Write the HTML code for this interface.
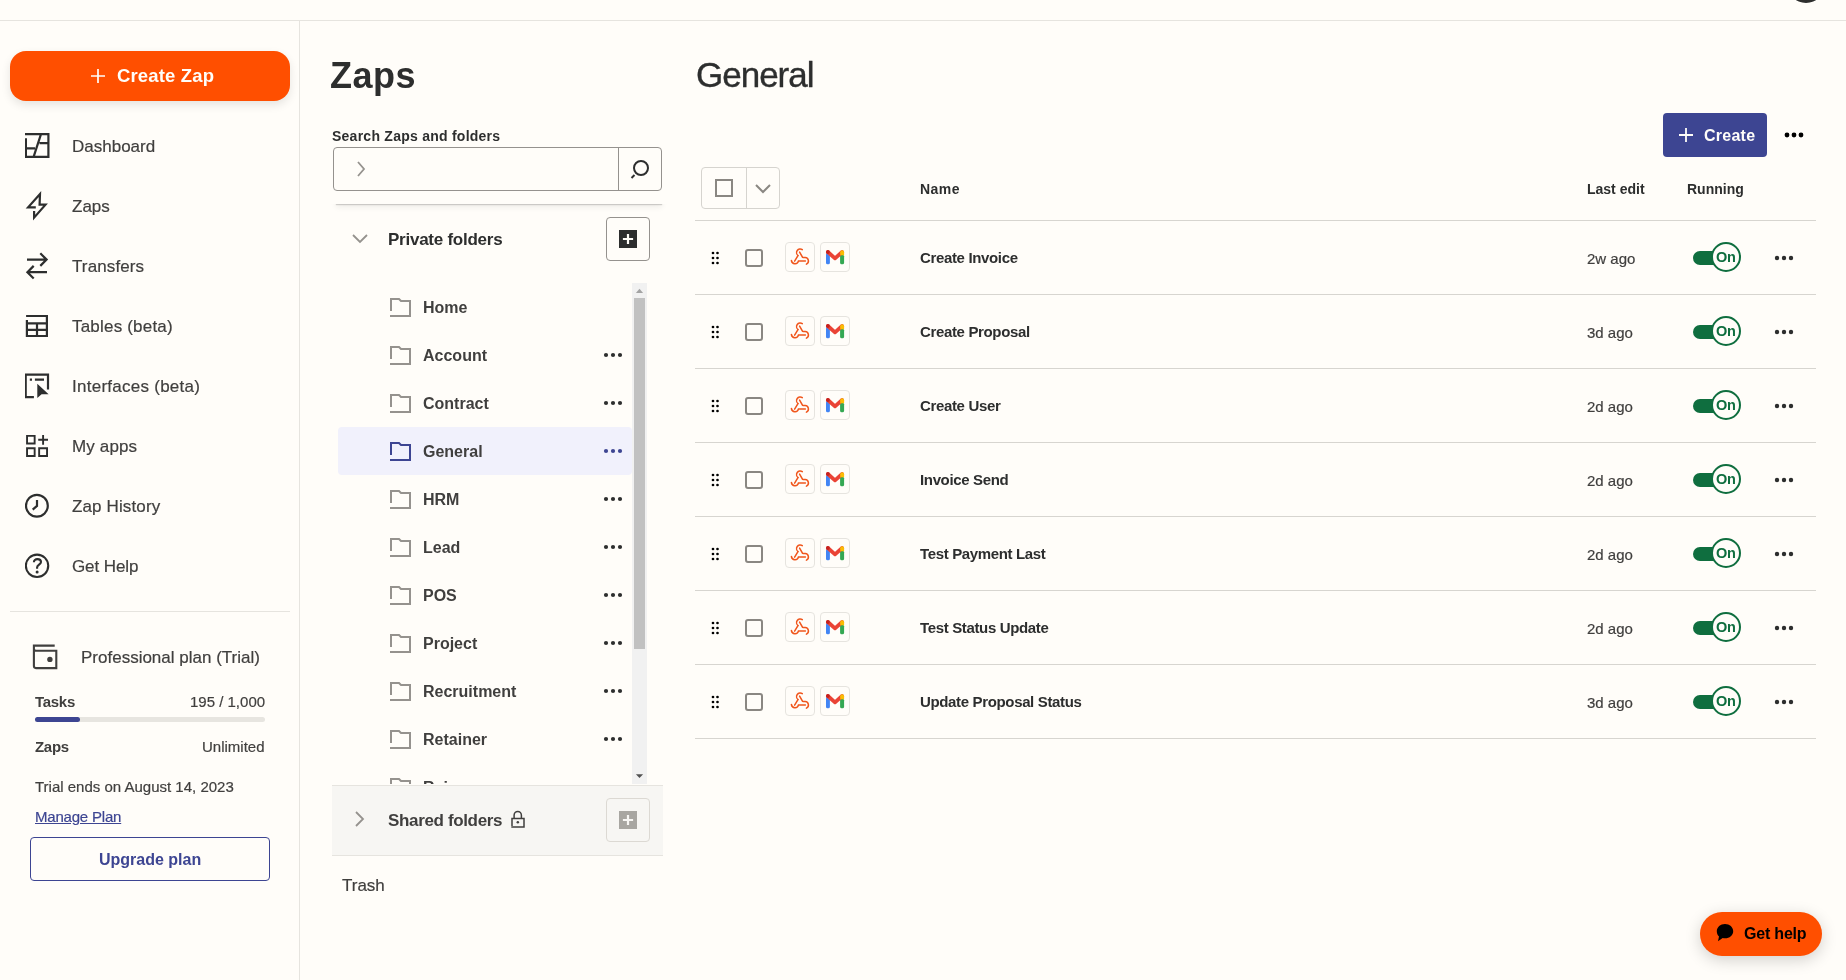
<!DOCTYPE html>
<html><head><meta charset="utf-8"><title>Zaps</title>
<style>
html,body{margin:0;padding:0;}
body{width:1846px;height:980px;overflow:hidden;position:relative;background:#fffdf9;font-family:"Liberation Sans",sans-serif;}
.t{position:absolute;white-space:nowrap;will-change:transform;}
svg{display:block;}
</style></head><body>
<div style="position:absolute;left:0px;top:20px;width:1846px;height:1px;background:#e6e4df"></div>
<div style="position:absolute;left:1787px;top:-35px;width:38px;height:38px;background:#2d2e2e;border-radius:50%"></div>
<div style="position:absolute;left:299px;top:21px;width:1px;height:959px;background:#e6e4df"></div>
<div style="position:absolute;left:10px;top:51px;width:280px;height:50px;background:#ff4f00;border-radius:16px;box-shadow:0 4px 10px rgba(0,0,0,0.10)"></div>
<svg style="position:absolute;left:91px;top:69px;" width="14" height="14" viewBox="0 0 14 14"><path d="M7 0V14M0 7H14" stroke="#fffdf9" stroke-width="1.7"/></svg>
<div class="t" style="top:67px;font-size:18.5px;line-height:18.5px;font-weight:700;color:#fffdf9;letter-spacing:0.15px;left:117px;">Create Zap</div>
<svg style="position:absolute;left:25px;top:133px;" width="26" height="26" viewBox="0 0 26 26"><path d="M0 1.2H23.4V23.9H0.9V5.3M0 15.3H10M14.5 10.2H23M16 1.2L8.6 23.9" fill="none" stroke="#2d2e2e" stroke-width="2.2"/></svg>
<div class="t" style="top:138px;font-size:17px;line-height:17px;font-weight:400;color:#403f3e;-webkit-text-stroke:0.2px currentColor;left:72px;">Dashboard</div>
<svg style="position:absolute;left:25px;top:190px;" width="25" height="31" viewBox="0 0 25 31"><path d="M10.8 17.3H3.1L15 3.9L14.6 14.7H20.5L9.1 27.7V21.1" fill="none" stroke="#2d2e2e" stroke-width="2.2" stroke-linejoin="miter" stroke-miterlimit="10"/></svg>
<div class="t" style="top:198px;font-size:17px;line-height:17px;font-weight:400;color:#403f3e;-webkit-text-stroke:0.2px currentColor;left:72px;">Zaps</div>
<svg style="position:absolute;left:25px;top:252px;" width="25" height="28" viewBox="0 0 25 28"><path d="M2 7.6H21.6M15.3 1.3L21.6 7.6L15.3 13.9M22 20.2H2.4M8.7 13.9L2.4 20.2L8.7 26.5" fill="none" stroke="#2d2e2e" stroke-width="2.2"/></svg>
<div class="t" style="top:258px;font-size:17px;line-height:17px;font-weight:400;color:#403f3e;letter-spacing:0.12px;-webkit-text-stroke:0.2px currentColor;left:72px;">Transfers</div>
<svg style="position:absolute;left:25px;top:314px;" width="25" height="25" viewBox="0 0 25 25"><path d="M1.1 2H21.9V22H1.9V6.1M1.9 9.3H21.9M1.9 15.9H21.9M12 9.3V22" fill="none" stroke="#2d2e2e" stroke-width="2.2"/></svg>
<div class="t" style="top:318px;font-size:17px;line-height:17px;font-weight:400;color:#403f3e;letter-spacing:0.2px;-webkit-text-stroke:0.2px currentColor;left:72px;">Tables (beta)</div>
<svg style="position:absolute;left:25px;top:373px;" width="26" height="27" viewBox="0 0 26 27"><path d="M23 16.6V1.6H0.7V24.2H8.9M4.8 6.6H7M9.9 6.6H19" fill="none" stroke="#2d2e2e" stroke-width="2.2"/><path d="M12.3 10.8L23.6 21.2H16.6L12.3 24.9Z" fill="#2d2e2e"/></svg>
<div class="t" style="top:378px;font-size:17px;line-height:17px;font-weight:400;color:#403f3e;letter-spacing:0.26px;-webkit-text-stroke:0.2px currentColor;left:72px;">Interfaces (beta)</div>
<svg style="position:absolute;left:25px;top:434px;" width="25" height="25" viewBox="0 0 25 25"><path d="M2.05 1.85H9.65V9.55H2.05ZM2.05 14.25H9.65V21.95H2.05ZM14.15 14.25H22.05V21.95H14.15ZM13.2 5.8H23M18.1 0.9V10.8" fill="none" stroke="#2d2e2e" stroke-width="1.9"/></svg>
<div class="t" style="top:438px;font-size:17px;line-height:17px;font-weight:400;color:#403f3e;letter-spacing:0.14px;-webkit-text-stroke:0.2px currentColor;left:72px;">My apps</div>
<svg style="position:absolute;left:25px;top:493px;" width="25" height="26" viewBox="0 0 25 26"><circle cx="11.9" cy="12.7" r="10.9" fill="none" stroke="#2d2e2e" stroke-width="2.2"/><path d="M12 7.1V12.9L7.7 16.6" fill="none" stroke="#2d2e2e" stroke-width="2.2"/></svg>
<div class="t" style="top:498px;font-size:17px;line-height:17px;font-weight:400;color:#403f3e;letter-spacing:0.13px;-webkit-text-stroke:0.2px currentColor;left:72px;">Zap History</div>
<svg style="position:absolute;left:25px;top:553px;" width="25" height="26" viewBox="0 0 25 26"><circle cx="12.05" cy="12.8" r="11.2" fill="none" stroke="#2d2e2e" stroke-width="2.1"/><path d="M8.9 9.2C8.9 7.3 10.3 6.1 12.4 6.1C14.6 6.1 16 7.5 16 9.1C16 11.4 12.1 12 12.1 14.4V15.7" fill="none" stroke="#2d2e2e" stroke-width="2.1"/><circle cx="12.1" cy="19.1" r="1.5" fill="#2d2e2e"/></svg>
<div class="t" style="top:558px;font-size:17px;line-height:17px;font-weight:400;color:#403f3e;letter-spacing:-0.1px;-webkit-text-stroke:0.2px currentColor;left:72px;">Get Help</div>
<div style="position:absolute;left:10px;top:611px;width:280px;height:1px;background:#e6e4df"></div>
<svg style="position:absolute;left:32px;top:644px;" width="27" height="27" viewBox="0 0 27 27"><path d="M1 1.6H22.7M1.9 0.6V22.1Q1.9 24.1 3.9 24.1H24.3V6.8H4Q1.9 6.8 1.9 4.7" fill="none" stroke="#403f3e" stroke-width="2.1"/><circle cx="17.9" cy="15.4" r="2.7" fill="#403f3e"/></svg>
<div class="t" style="top:649px;font-size:17px;line-height:17px;font-weight:400;color:#403f3e;-webkit-text-stroke:0.2px currentColor;left:81px;">Professional plan (Trial)</div>
<div class="t" style="top:694px;font-size:15px;line-height:15px;font-weight:700;color:#403f3e;letter-spacing:-0.3px;left:35px;">Tasks</div>
<div class="t" style="top:694px;font-size:15px;line-height:15px;font-weight:400;color:#403f3e;-webkit-text-stroke:0.2px currentColor;right:1581px;">195 / 1,000</div>
<div style="position:absolute;left:35px;top:717px;width:230px;height:5px;background:#e7e5e0;border-radius:3px"></div>
<div style="position:absolute;left:35px;top:717px;width:45px;height:5px;background:#3d4592;border-radius:3px"></div>
<div class="t" style="top:739px;font-size:15px;line-height:15px;font-weight:700;color:#403f3e;letter-spacing:-0.3px;left:35px;">Zaps</div>
<div class="t" style="top:739px;font-size:15px;line-height:15px;font-weight:400;color:#403f3e;-webkit-text-stroke:0.2px currentColor;right:1581px;">Unlimited</div>
<div class="t" style="top:779px;font-size:15px;line-height:15px;font-weight:400;color:#403f3e;-webkit-text-stroke:0.2px currentColor;left:35px;">Trial ends on August 14, 2023</div>
<div class="t" style="top:809px;font-size:15px;line-height:15px;font-weight:400;color:#3d4592;letter-spacing:-0.2px;-webkit-text-stroke:0.2px currentColor;left:35px;text-decoration:underline;">Manage Plan</div>
<div style="position:absolute;left:30px;top:837px;width:240px;height:44px;border:1px solid #3d4592;border-radius:4px;box-sizing:border-box"></div>
<div class="t" style="top:852px;font-size:16px;line-height:16px;font-weight:700;color:#3d4592;left:99px;">Upgrade plan</div>
<div class="t" style="top:58px;font-size:36px;line-height:36px;font-weight:700;color:#2d2e2e;letter-spacing:0.5px;left:330px;">Zaps</div>
<div class="t" style="top:129px;font-size:14px;line-height:14px;font-weight:700;color:#2d2e2e;letter-spacing:0.25px;left:332px;">Search Zaps and folders</div>
<div style="position:absolute;left:333px;top:147px;width:329px;height:44px;border:1px solid #95928e;border-radius:4px;box-sizing:border-box"></div>
<div style="position:absolute;left:618px;top:147px;width:1px;height:44px;background:#95928e"></div>
<svg style="position:absolute;left:355px;top:160px;" width="12" height="18" viewBox="0 0 12 18"><path d="M3 2L9 9L3 16" fill="none" stroke="#95928e" stroke-width="1.8"/></svg>
<svg style="position:absolute;left:628px;top:156px;" width="24" height="24" viewBox="0 0 24 24"><circle cx="13" cy="12" r="7" fill="none" stroke="#2d2e2e" stroke-width="2"/><path d="M3.5 22L6.5 19" stroke="#2d2e2e" stroke-width="2"/></svg>
<div style="position:absolute;left:320px;top:204px;width:360px;height:14px;overflow:hidden"><div style="position:absolute;left:16px;top:-10px;width:326px;height:10px;background:#fffdf9;box-shadow:0 1px 1px rgba(0,0,0,0.16),0 3px 6px rgba(0,0,0,0.07)"></div></div>
<svg style="position:absolute;left:351px;top:232px;" width="18" height="14" viewBox="0 0 18 14"><path d="M2 3L9 10L16 3" fill="none" stroke="#95928e" stroke-width="1.8"/></svg>
<div class="t" style="top:231px;font-size:17px;line-height:17px;font-weight:700;color:#2d2e2e;letter-spacing:-0.25px;left:388px;">Private folders</div>
<div style="position:absolute;left:606px;top:217px;width:44px;height:44px;border:1px solid #95928e;border-radius:4px;box-sizing:border-box"></div>
<div style="position:absolute;left:619px;top:230px;width:18px;height:18px;background:#2d2e2e"></div>
<svg style="position:absolute;left:619px;top:230px;" width="18" height="18" viewBox="0 0 18 18"><path d="M9 3.9V14.1M3.9 9H14.1" stroke="#fffdf9" stroke-width="2.2"/></svg>
<div style="position:absolute;left:338px;top:427px;width:294px;height:48px;background:#f1f1fc;border-radius:4px"></div>
<svg style="position:absolute;left:389px;top:297px;" width="23" height="21" viewBox="0 0 23 21"><path d="M2 14V2H10L12 4H21V19H1" fill="none" stroke="#95928e" stroke-width="2"/></svg>
<div class="t" style="top:300px;font-size:16px;line-height:16px;font-weight:700;color:#403f3e;left:423px;">Home</div>
<svg style="position:absolute;left:389px;top:345px;" width="23" height="21" viewBox="0 0 23 21"><path d="M2 14V2H10L12 4H21V19H1" fill="none" stroke="#95928e" stroke-width="2"/></svg>
<div class="t" style="top:348px;font-size:16px;line-height:16px;font-weight:700;color:#403f3e;left:423px;">Account</div>
<svg style="position:absolute;left:603px;top:352px;" width="20" height="6" viewBox="0 0 20 6"><circle cx="3" cy="3" r="2.1" fill="#2d2e2e"/><circle cx="10" cy="3" r="2.1" fill="#2d2e2e"/><circle cx="17" cy="3" r="2.1" fill="#2d2e2e"/></svg>
<svg style="position:absolute;left:389px;top:393px;" width="23" height="21" viewBox="0 0 23 21"><path d="M2 14V2H10L12 4H21V19H1" fill="none" stroke="#95928e" stroke-width="2"/></svg>
<div class="t" style="top:396px;font-size:16px;line-height:16px;font-weight:700;color:#403f3e;left:423px;">Contract</div>
<svg style="position:absolute;left:603px;top:400px;" width="20" height="6" viewBox="0 0 20 6"><circle cx="3" cy="3" r="2.1" fill="#2d2e2e"/><circle cx="10" cy="3" r="2.1" fill="#2d2e2e"/><circle cx="17" cy="3" r="2.1" fill="#2d2e2e"/></svg>
<svg style="position:absolute;left:389px;top:441px;" width="23" height="21" viewBox="0 0 23 21"><path d="M2 14V2H10L12 4H21V19H1" fill="none" stroke="#3d4592" stroke-width="2"/></svg>
<div class="t" style="top:444px;font-size:16px;line-height:16px;font-weight:700;color:#403f3e;left:423px;">General</div>
<svg style="position:absolute;left:603px;top:448px;" width="20" height="6" viewBox="0 0 20 6"><circle cx="3" cy="3" r="2.1" fill="#3d4592"/><circle cx="10" cy="3" r="2.1" fill="#3d4592"/><circle cx="17" cy="3" r="2.1" fill="#3d4592"/></svg>
<svg style="position:absolute;left:389px;top:489px;" width="23" height="21" viewBox="0 0 23 21"><path d="M2 14V2H10L12 4H21V19H1" fill="none" stroke="#95928e" stroke-width="2"/></svg>
<div class="t" style="top:492px;font-size:16px;line-height:16px;font-weight:700;color:#403f3e;left:423px;">HRM</div>
<svg style="position:absolute;left:603px;top:496px;" width="20" height="6" viewBox="0 0 20 6"><circle cx="3" cy="3" r="2.1" fill="#2d2e2e"/><circle cx="10" cy="3" r="2.1" fill="#2d2e2e"/><circle cx="17" cy="3" r="2.1" fill="#2d2e2e"/></svg>
<svg style="position:absolute;left:389px;top:537px;" width="23" height="21" viewBox="0 0 23 21"><path d="M2 14V2H10L12 4H21V19H1" fill="none" stroke="#95928e" stroke-width="2"/></svg>
<div class="t" style="top:540px;font-size:16px;line-height:16px;font-weight:700;color:#403f3e;left:423px;">Lead</div>
<svg style="position:absolute;left:603px;top:544px;" width="20" height="6" viewBox="0 0 20 6"><circle cx="3" cy="3" r="2.1" fill="#2d2e2e"/><circle cx="10" cy="3" r="2.1" fill="#2d2e2e"/><circle cx="17" cy="3" r="2.1" fill="#2d2e2e"/></svg>
<svg style="position:absolute;left:389px;top:585px;" width="23" height="21" viewBox="0 0 23 21"><path d="M2 14V2H10L12 4H21V19H1" fill="none" stroke="#95928e" stroke-width="2"/></svg>
<div class="t" style="top:588px;font-size:16px;line-height:16px;font-weight:700;color:#403f3e;left:423px;">POS</div>
<svg style="position:absolute;left:603px;top:592px;" width="20" height="6" viewBox="0 0 20 6"><circle cx="3" cy="3" r="2.1" fill="#2d2e2e"/><circle cx="10" cy="3" r="2.1" fill="#2d2e2e"/><circle cx="17" cy="3" r="2.1" fill="#2d2e2e"/></svg>
<svg style="position:absolute;left:389px;top:633px;" width="23" height="21" viewBox="0 0 23 21"><path d="M2 14V2H10L12 4H21V19H1" fill="none" stroke="#95928e" stroke-width="2"/></svg>
<div class="t" style="top:636px;font-size:16px;line-height:16px;font-weight:700;color:#403f3e;left:423px;">Project</div>
<svg style="position:absolute;left:603px;top:640px;" width="20" height="6" viewBox="0 0 20 6"><circle cx="3" cy="3" r="2.1" fill="#2d2e2e"/><circle cx="10" cy="3" r="2.1" fill="#2d2e2e"/><circle cx="17" cy="3" r="2.1" fill="#2d2e2e"/></svg>
<svg style="position:absolute;left:389px;top:681px;" width="23" height="21" viewBox="0 0 23 21"><path d="M2 14V2H10L12 4H21V19H1" fill="none" stroke="#95928e" stroke-width="2"/></svg>
<div class="t" style="top:684px;font-size:16px;line-height:16px;font-weight:700;color:#403f3e;left:423px;">Recruitment</div>
<svg style="position:absolute;left:603px;top:688px;" width="20" height="6" viewBox="0 0 20 6"><circle cx="3" cy="3" r="2.1" fill="#2d2e2e"/><circle cx="10" cy="3" r="2.1" fill="#2d2e2e"/><circle cx="17" cy="3" r="2.1" fill="#2d2e2e"/></svg>
<svg style="position:absolute;left:389px;top:729px;" width="23" height="21" viewBox="0 0 23 21"><path d="M2 14V2H10L12 4H21V19H1" fill="none" stroke="#95928e" stroke-width="2"/></svg>
<div class="t" style="top:732px;font-size:16px;line-height:16px;font-weight:700;color:#403f3e;left:423px;">Retainer</div>
<svg style="position:absolute;left:603px;top:736px;" width="20" height="6" viewBox="0 0 20 6"><circle cx="3" cy="3" r="2.1" fill="#2d2e2e"/><circle cx="10" cy="3" r="2.1" fill="#2d2e2e"/><circle cx="17" cy="3" r="2.1" fill="#2d2e2e"/></svg>
<svg style="position:absolute;left:389px;top:777px;" width="23" height="21" viewBox="0 0 23 21"><path d="M2 14V2H10L12 4H21V19H1" fill="none" stroke="#95928e" stroke-width="2"/></svg>
<div class="t" style="top:780px;font-size:16px;line-height:16px;font-weight:700;color:#403f3e;left:423px;">Reissue</div>
<svg style="position:absolute;left:603px;top:784px;" width="20" height="6" viewBox="0 0 20 6"><circle cx="3" cy="3" r="2.1" fill="#2d2e2e"/><circle cx="10" cy="3" r="2.1" fill="#2d2e2e"/><circle cx="17" cy="3" r="2.1" fill="#2d2e2e"/></svg>
<div style="position:absolute;left:332px;top:205px;width:300px;height:78px;background:transparent"></div>
<div style="position:absolute;left:332px;top:784px;width:300px;height:1px;background:#fffdf9"></div>
<div style="position:absolute;left:632px;top:283px;width:15px;height:501px;background:#f1f1f1"></div>
<div style="position:absolute;left:634px;top:298px;width:11px;height:351px;background:#c1c1c1"></div>
<svg style="position:absolute;left:635px;top:285px;" width="9" height="9" viewBox="0 0 9 9"><path d="M0.9 7.9L4.5 3.8L8.1 7.9Z" fill="#a3a3a3"/></svg>
<svg style="position:absolute;left:635px;top:771px;" width="9" height="9" viewBox="0 0 9 9"><path d="M0.9 3.2L4.5 7L8.1 3.2Z" fill="#505050"/></svg>
<div style="position:absolute;left:332px;top:785px;width:331px;height:71px;background:#f7f6f3;border-top:1px solid #e6e4df;border-bottom:1px solid #e6e4df;box-sizing:border-box"></div>
<svg style="position:absolute;left:352px;top:810px;" width="14" height="18" viewBox="0 0 14 18"><path d="M4 2L11 9L4 16" fill="none" stroke="#95928e" stroke-width="1.8"/></svg>
<div class="t" style="top:812px;font-size:17px;line-height:17px;font-weight:700;color:#403f3e;letter-spacing:-0.35px;left:387.5px;">Shared folders</div>
<svg style="position:absolute;left:510px;top:810px;" width="16" height="19" viewBox="0 0 16 19"><path d="M4.1 8.4V5.2A3.65 3.65 0 0 1 11.4 5.2V8.4M2 16V8.4H14V17.1H1.3" fill="none" stroke="#403f3e" stroke-width="1.5"/><circle cx="7.8" cy="12.3" r="1.25" fill="#403f3e"/></svg>
<div style="position:absolute;left:606px;top:798px;width:44px;height:44px;border:1px solid #dcd9d3;border-radius:4px;box-sizing:border-box"></div>
<div style="position:absolute;left:619px;top:811px;width:18px;height:18px;background:#a8a6a1"></div>
<svg style="position:absolute;left:619px;top:811px;" width="18" height="18" viewBox="0 0 18 18"><path d="M9 3.9V14.1M3.9 9H14.1" stroke="#f7f6f3" stroke-width="2.2"/></svg>
<div class="t" style="top:877px;font-size:17px;line-height:17px;font-weight:400;color:#403f3e;-webkit-text-stroke:0.2px currentColor;left:342px;">Trash</div>
<div class="t" style="top:57px;font-size:35px;line-height:35px;font-weight:400;color:#2d2e2e;letter-spacing:-1px;left:696px;-webkit-text-stroke:0.35px #2d2e2e;">General</div>
<div style="position:absolute;left:1663px;top:113px;width:104px;height:44px;background:#3d4592;border-radius:4px"></div>
<svg style="position:absolute;left:1679px;top:128px;" width="14" height="14" viewBox="0 0 14 14"><path d="M7 0V14M0 7H14" stroke="#fffdf9" stroke-width="1.8"/></svg>
<div class="t" style="top:128px;font-size:16px;line-height:16px;font-weight:700;color:#fffdf9;letter-spacing:0.25px;left:1704.3px;">Create</div>
<svg style="position:absolute;left:1784px;top:131px;" width="20" height="8" viewBox="0 0 20 8"><circle cx="3" cy="4" r="2.4" fill="#000"/><circle cx="10" cy="4" r="2.4" fill="#000"/><circle cx="17" cy="4" r="2.4" fill="#000"/></svg>
<div style="position:absolute;left:701px;top:167px;width:79px;height:42px;border:1px solid #d6d4cf;border-radius:4px;box-sizing:border-box"></div>
<div style="position:absolute;left:746px;top:167px;width:1px;height:42px;background:#d6d4cf"></div>
<div style="position:absolute;left:715px;top:179px;width:18px;height:18px;border:2px solid #8a8782;box-sizing:border-box"></div>
<svg style="position:absolute;left:754px;top:183px;" width="18" height="12" viewBox="0 0 18 12"><path d="M2 2L9 9L16 2" fill="none" stroke="#8a8782" stroke-width="2"/></svg>
<div class="t" style="top:182px;font-size:14px;line-height:14px;font-weight:700;color:#2d2e2e;letter-spacing:0.45px;left:920px;">Name</div>
<div class="t" style="top:182px;font-size:14px;line-height:14px;font-weight:700;color:#2d2e2e;left:1587px;">Last edit</div>
<div class="t" style="top:182px;font-size:14px;line-height:14px;font-weight:700;color:#2d2e2e;left:1687px;">Running</div>
<div style="position:absolute;left:695px;top:220px;width:1121px;height:1px;background:#d7d5d0"></div>
<svg style="position:absolute;left:711px;top:250px;" width="9" height="16" viewBox="0 0 9 16"><circle cx="2" cy="3" r="1.35" fill="#000"/><circle cx="2" cy="8" r="1.35" fill="#000"/><circle cx="2" cy="13" r="1.35" fill="#000"/><circle cx="6.5" cy="3" r="1.35" fill="#000"/><circle cx="6.5" cy="8" r="1.35" fill="#000"/><circle cx="6.5" cy="13" r="1.35" fill="#000"/></svg>
<div style="position:absolute;left:745px;top:249px;width:18px;height:18px;border:2px solid #8a8782;border-radius:3px;box-sizing:border-box"></div>
<div style="position:absolute;left:785px;top:242px;width:30px;height:30px;border:1px solid #e6e4df;border-radius:4px;box-sizing:border-box"></div>
<div style="position:absolute;left:820px;top:242px;width:30px;height:30px;border:1px solid #e6e4df;border-radius:4px;box-sizing:border-box"></div>
<svg style="position:absolute;left:788px;top:245px;" width="24" height="24" viewBox="0 0 24 24"><g fill="none" stroke="#f0561c" stroke-width="1.5" stroke-linecap="round"><path d="M14.3 4.6A3.6 3.6 0 1 0 10.1 10.5L6.6 16.2"/><path d="M11.6 7.1L14.6 12.4C15.3 12.7 16.2 12.6 17.2 12.6A3.4 3.4 0 0 1 18.4 19.1"/><path d="M3.4 15.4A3.6 3.6 0 0 0 10.5 15.9H17.4"/></g></svg>
<svg style="position:absolute;left:823px;top:246px;" width="24" height="22" viewBox="0 0 24 22"><g transform="translate(0 0.7)"><rect x="3" y="6" width="3.9" height="11.6" rx="1.6" fill="#4285f4"/><rect x="17.1" y="8" width="4" height="9.6" rx="1.6" fill="#34a853"/><path d="M4.9 5.3L12 11.6L19.1 5.3" fill="none" stroke="#ea4335" stroke-width="3.8" stroke-linecap="round" stroke-linejoin="round"/><path d="M17.2 8.6V5.5A1.95 1.95 0 0 1 21.1 5.5V8.6Z" fill="#fbbc04"/><circle cx="4.9" cy="5.3" r="1.9" fill="#c5221f"/></g></svg>
<div class="t" style="top:250px;font-size:15px;line-height:15px;font-weight:700;color:#2d2e2e;letter-spacing:-0.35px;left:920px;">Create Invoice</div>
<div class="t" style="top:251px;font-size:15px;line-height:15px;font-weight:400;color:#403f3e;-webkit-text-stroke:0.2px currentColor;left:1587px;">2w ago</div>
<div style="position:absolute;left:1693px;top:251px;width:45px;height:14px;background:#0f6e3f;border-radius:7px"></div>
<div style="position:absolute;left:1711px;top:242px;width:30px;height:30px;background:#fffdf9;border:2px solid #0f6e3f;border-radius:50%;box-sizing:border-box"></div>
<div class="t" style="top:250px;font-size:14.5px;line-height:14.5px;font-weight:700;color:#0f6e3f;letter-spacing:-0.3px;left:1716px;">On</div>
<svg style="position:absolute;left:1774px;top:254px;" width="20" height="7" viewBox="0 0 20 7"><circle cx="3" cy="4" r="2.2" fill="#2d2e2e"/><circle cx="10" cy="4" r="2.2" fill="#2d2e2e"/><circle cx="17" cy="4" r="2.2" fill="#2d2e2e"/></svg>
<div style="position:absolute;left:695px;top:294px;width:1121px;height:1px;background:#d7d5d0"></div>
<svg style="position:absolute;left:711px;top:324px;" width="9" height="16" viewBox="0 0 9 16"><circle cx="2" cy="3" r="1.35" fill="#000"/><circle cx="2" cy="8" r="1.35" fill="#000"/><circle cx="2" cy="13" r="1.35" fill="#000"/><circle cx="6.5" cy="3" r="1.35" fill="#000"/><circle cx="6.5" cy="8" r="1.35" fill="#000"/><circle cx="6.5" cy="13" r="1.35" fill="#000"/></svg>
<div style="position:absolute;left:745px;top:323px;width:18px;height:18px;border:2px solid #8a8782;border-radius:3px;box-sizing:border-box"></div>
<div style="position:absolute;left:785px;top:316px;width:30px;height:30px;border:1px solid #e6e4df;border-radius:4px;box-sizing:border-box"></div>
<div style="position:absolute;left:820px;top:316px;width:30px;height:30px;border:1px solid #e6e4df;border-radius:4px;box-sizing:border-box"></div>
<svg style="position:absolute;left:788px;top:319px;" width="24" height="24" viewBox="0 0 24 24"><g fill="none" stroke="#f0561c" stroke-width="1.5" stroke-linecap="round"><path d="M14.3 4.6A3.6 3.6 0 1 0 10.1 10.5L6.6 16.2"/><path d="M11.6 7.1L14.6 12.4C15.3 12.7 16.2 12.6 17.2 12.6A3.4 3.4 0 0 1 18.4 19.1"/><path d="M3.4 15.4A3.6 3.6 0 0 0 10.5 15.9H17.4"/></g></svg>
<svg style="position:absolute;left:823px;top:320px;" width="24" height="22" viewBox="0 0 24 22"><g transform="translate(0 0.7)"><rect x="3" y="6" width="3.9" height="11.6" rx="1.6" fill="#4285f4"/><rect x="17.1" y="8" width="4" height="9.6" rx="1.6" fill="#34a853"/><path d="M4.9 5.3L12 11.6L19.1 5.3" fill="none" stroke="#ea4335" stroke-width="3.8" stroke-linecap="round" stroke-linejoin="round"/><path d="M17.2 8.6V5.5A1.95 1.95 0 0 1 21.1 5.5V8.6Z" fill="#fbbc04"/><circle cx="4.9" cy="5.3" r="1.9" fill="#c5221f"/></g></svg>
<div class="t" style="top:324px;font-size:15px;line-height:15px;font-weight:700;color:#2d2e2e;letter-spacing:-0.35px;left:920px;">Create Proposal</div>
<div class="t" style="top:325px;font-size:15px;line-height:15px;font-weight:400;color:#403f3e;-webkit-text-stroke:0.2px currentColor;left:1587px;">3d ago</div>
<div style="position:absolute;left:1693px;top:325px;width:45px;height:14px;background:#0f6e3f;border-radius:7px"></div>
<div style="position:absolute;left:1711px;top:316px;width:30px;height:30px;background:#fffdf9;border:2px solid #0f6e3f;border-radius:50%;box-sizing:border-box"></div>
<div class="t" style="top:324px;font-size:14.5px;line-height:14.5px;font-weight:700;color:#0f6e3f;letter-spacing:-0.3px;left:1716px;">On</div>
<svg style="position:absolute;left:1774px;top:328px;" width="20" height="7" viewBox="0 0 20 7"><circle cx="3" cy="4" r="2.2" fill="#2d2e2e"/><circle cx="10" cy="4" r="2.2" fill="#2d2e2e"/><circle cx="17" cy="4" r="2.2" fill="#2d2e2e"/></svg>
<div style="position:absolute;left:695px;top:368px;width:1121px;height:1px;background:#d7d5d0"></div>
<svg style="position:absolute;left:711px;top:398px;" width="9" height="16" viewBox="0 0 9 16"><circle cx="2" cy="3" r="1.35" fill="#000"/><circle cx="2" cy="8" r="1.35" fill="#000"/><circle cx="2" cy="13" r="1.35" fill="#000"/><circle cx="6.5" cy="3" r="1.35" fill="#000"/><circle cx="6.5" cy="8" r="1.35" fill="#000"/><circle cx="6.5" cy="13" r="1.35" fill="#000"/></svg>
<div style="position:absolute;left:745px;top:397px;width:18px;height:18px;border:2px solid #8a8782;border-radius:3px;box-sizing:border-box"></div>
<div style="position:absolute;left:785px;top:390px;width:30px;height:30px;border:1px solid #e6e4df;border-radius:4px;box-sizing:border-box"></div>
<div style="position:absolute;left:820px;top:390px;width:30px;height:30px;border:1px solid #e6e4df;border-radius:4px;box-sizing:border-box"></div>
<svg style="position:absolute;left:788px;top:393px;" width="24" height="24" viewBox="0 0 24 24"><g fill="none" stroke="#f0561c" stroke-width="1.5" stroke-linecap="round"><path d="M14.3 4.6A3.6 3.6 0 1 0 10.1 10.5L6.6 16.2"/><path d="M11.6 7.1L14.6 12.4C15.3 12.7 16.2 12.6 17.2 12.6A3.4 3.4 0 0 1 18.4 19.1"/><path d="M3.4 15.4A3.6 3.6 0 0 0 10.5 15.9H17.4"/></g></svg>
<svg style="position:absolute;left:823px;top:394px;" width="24" height="22" viewBox="0 0 24 22"><g transform="translate(0 0.7)"><rect x="3" y="6" width="3.9" height="11.6" rx="1.6" fill="#4285f4"/><rect x="17.1" y="8" width="4" height="9.6" rx="1.6" fill="#34a853"/><path d="M4.9 5.3L12 11.6L19.1 5.3" fill="none" stroke="#ea4335" stroke-width="3.8" stroke-linecap="round" stroke-linejoin="round"/><path d="M17.2 8.6V5.5A1.95 1.95 0 0 1 21.1 5.5V8.6Z" fill="#fbbc04"/><circle cx="4.9" cy="5.3" r="1.9" fill="#c5221f"/></g></svg>
<div class="t" style="top:398px;font-size:15px;line-height:15px;font-weight:700;color:#2d2e2e;letter-spacing:-0.35px;left:920px;">Create User</div>
<div class="t" style="top:399px;font-size:15px;line-height:15px;font-weight:400;color:#403f3e;-webkit-text-stroke:0.2px currentColor;left:1587px;">2d ago</div>
<div style="position:absolute;left:1693px;top:399px;width:45px;height:14px;background:#0f6e3f;border-radius:7px"></div>
<div style="position:absolute;left:1711px;top:390px;width:30px;height:30px;background:#fffdf9;border:2px solid #0f6e3f;border-radius:50%;box-sizing:border-box"></div>
<div class="t" style="top:398px;font-size:14.5px;line-height:14.5px;font-weight:700;color:#0f6e3f;letter-spacing:-0.3px;left:1716px;">On</div>
<svg style="position:absolute;left:1774px;top:402px;" width="20" height="7" viewBox="0 0 20 7"><circle cx="3" cy="4" r="2.2" fill="#2d2e2e"/><circle cx="10" cy="4" r="2.2" fill="#2d2e2e"/><circle cx="17" cy="4" r="2.2" fill="#2d2e2e"/></svg>
<div style="position:absolute;left:695px;top:442px;width:1121px;height:1px;background:#d7d5d0"></div>
<svg style="position:absolute;left:711px;top:472px;" width="9" height="16" viewBox="0 0 9 16"><circle cx="2" cy="3" r="1.35" fill="#000"/><circle cx="2" cy="8" r="1.35" fill="#000"/><circle cx="2" cy="13" r="1.35" fill="#000"/><circle cx="6.5" cy="3" r="1.35" fill="#000"/><circle cx="6.5" cy="8" r="1.35" fill="#000"/><circle cx="6.5" cy="13" r="1.35" fill="#000"/></svg>
<div style="position:absolute;left:745px;top:471px;width:18px;height:18px;border:2px solid #8a8782;border-radius:3px;box-sizing:border-box"></div>
<div style="position:absolute;left:785px;top:464px;width:30px;height:30px;border:1px solid #e6e4df;border-radius:4px;box-sizing:border-box"></div>
<div style="position:absolute;left:820px;top:464px;width:30px;height:30px;border:1px solid #e6e4df;border-radius:4px;box-sizing:border-box"></div>
<svg style="position:absolute;left:788px;top:467px;" width="24" height="24" viewBox="0 0 24 24"><g fill="none" stroke="#f0561c" stroke-width="1.5" stroke-linecap="round"><path d="M14.3 4.6A3.6 3.6 0 1 0 10.1 10.5L6.6 16.2"/><path d="M11.6 7.1L14.6 12.4C15.3 12.7 16.2 12.6 17.2 12.6A3.4 3.4 0 0 1 18.4 19.1"/><path d="M3.4 15.4A3.6 3.6 0 0 0 10.5 15.9H17.4"/></g></svg>
<svg style="position:absolute;left:823px;top:468px;" width="24" height="22" viewBox="0 0 24 22"><g transform="translate(0 0.7)"><rect x="3" y="6" width="3.9" height="11.6" rx="1.6" fill="#4285f4"/><rect x="17.1" y="8" width="4" height="9.6" rx="1.6" fill="#34a853"/><path d="M4.9 5.3L12 11.6L19.1 5.3" fill="none" stroke="#ea4335" stroke-width="3.8" stroke-linecap="round" stroke-linejoin="round"/><path d="M17.2 8.6V5.5A1.95 1.95 0 0 1 21.1 5.5V8.6Z" fill="#fbbc04"/><circle cx="4.9" cy="5.3" r="1.9" fill="#c5221f"/></g></svg>
<div class="t" style="top:472px;font-size:15px;line-height:15px;font-weight:700;color:#2d2e2e;letter-spacing:-0.35px;left:920px;">Invoice Send</div>
<div class="t" style="top:473px;font-size:15px;line-height:15px;font-weight:400;color:#403f3e;-webkit-text-stroke:0.2px currentColor;left:1587px;">2d ago</div>
<div style="position:absolute;left:1693px;top:473px;width:45px;height:14px;background:#0f6e3f;border-radius:7px"></div>
<div style="position:absolute;left:1711px;top:464px;width:30px;height:30px;background:#fffdf9;border:2px solid #0f6e3f;border-radius:50%;box-sizing:border-box"></div>
<div class="t" style="top:472px;font-size:14.5px;line-height:14.5px;font-weight:700;color:#0f6e3f;letter-spacing:-0.3px;left:1716px;">On</div>
<svg style="position:absolute;left:1774px;top:476px;" width="20" height="7" viewBox="0 0 20 7"><circle cx="3" cy="4" r="2.2" fill="#2d2e2e"/><circle cx="10" cy="4" r="2.2" fill="#2d2e2e"/><circle cx="17" cy="4" r="2.2" fill="#2d2e2e"/></svg>
<div style="position:absolute;left:695px;top:516px;width:1121px;height:1px;background:#d7d5d0"></div>
<svg style="position:absolute;left:711px;top:546px;" width="9" height="16" viewBox="0 0 9 16"><circle cx="2" cy="3" r="1.35" fill="#000"/><circle cx="2" cy="8" r="1.35" fill="#000"/><circle cx="2" cy="13" r="1.35" fill="#000"/><circle cx="6.5" cy="3" r="1.35" fill="#000"/><circle cx="6.5" cy="8" r="1.35" fill="#000"/><circle cx="6.5" cy="13" r="1.35" fill="#000"/></svg>
<div style="position:absolute;left:745px;top:545px;width:18px;height:18px;border:2px solid #8a8782;border-radius:3px;box-sizing:border-box"></div>
<div style="position:absolute;left:785px;top:538px;width:30px;height:30px;border:1px solid #e6e4df;border-radius:4px;box-sizing:border-box"></div>
<div style="position:absolute;left:820px;top:538px;width:30px;height:30px;border:1px solid #e6e4df;border-radius:4px;box-sizing:border-box"></div>
<svg style="position:absolute;left:788px;top:541px;" width="24" height="24" viewBox="0 0 24 24"><g fill="none" stroke="#f0561c" stroke-width="1.5" stroke-linecap="round"><path d="M14.3 4.6A3.6 3.6 0 1 0 10.1 10.5L6.6 16.2"/><path d="M11.6 7.1L14.6 12.4C15.3 12.7 16.2 12.6 17.2 12.6A3.4 3.4 0 0 1 18.4 19.1"/><path d="M3.4 15.4A3.6 3.6 0 0 0 10.5 15.9H17.4"/></g></svg>
<svg style="position:absolute;left:823px;top:542px;" width="24" height="22" viewBox="0 0 24 22"><g transform="translate(0 0.7)"><rect x="3" y="6" width="3.9" height="11.6" rx="1.6" fill="#4285f4"/><rect x="17.1" y="8" width="4" height="9.6" rx="1.6" fill="#34a853"/><path d="M4.9 5.3L12 11.6L19.1 5.3" fill="none" stroke="#ea4335" stroke-width="3.8" stroke-linecap="round" stroke-linejoin="round"/><path d="M17.2 8.6V5.5A1.95 1.95 0 0 1 21.1 5.5V8.6Z" fill="#fbbc04"/><circle cx="4.9" cy="5.3" r="1.9" fill="#c5221f"/></g></svg>
<div class="t" style="top:546px;font-size:15px;line-height:15px;font-weight:700;color:#2d2e2e;letter-spacing:-0.35px;left:920px;">Test Payment Last</div>
<div class="t" style="top:547px;font-size:15px;line-height:15px;font-weight:400;color:#403f3e;-webkit-text-stroke:0.2px currentColor;left:1587px;">2d ago</div>
<div style="position:absolute;left:1693px;top:547px;width:45px;height:14px;background:#0f6e3f;border-radius:7px"></div>
<div style="position:absolute;left:1711px;top:538px;width:30px;height:30px;background:#fffdf9;border:2px solid #0f6e3f;border-radius:50%;box-sizing:border-box"></div>
<div class="t" style="top:546px;font-size:14.5px;line-height:14.5px;font-weight:700;color:#0f6e3f;letter-spacing:-0.3px;left:1716px;">On</div>
<svg style="position:absolute;left:1774px;top:550px;" width="20" height="7" viewBox="0 0 20 7"><circle cx="3" cy="4" r="2.2" fill="#2d2e2e"/><circle cx="10" cy="4" r="2.2" fill="#2d2e2e"/><circle cx="17" cy="4" r="2.2" fill="#2d2e2e"/></svg>
<div style="position:absolute;left:695px;top:590px;width:1121px;height:1px;background:#d7d5d0"></div>
<svg style="position:absolute;left:711px;top:620px;" width="9" height="16" viewBox="0 0 9 16"><circle cx="2" cy="3" r="1.35" fill="#000"/><circle cx="2" cy="8" r="1.35" fill="#000"/><circle cx="2" cy="13" r="1.35" fill="#000"/><circle cx="6.5" cy="3" r="1.35" fill="#000"/><circle cx="6.5" cy="8" r="1.35" fill="#000"/><circle cx="6.5" cy="13" r="1.35" fill="#000"/></svg>
<div style="position:absolute;left:745px;top:619px;width:18px;height:18px;border:2px solid #8a8782;border-radius:3px;box-sizing:border-box"></div>
<div style="position:absolute;left:785px;top:612px;width:30px;height:30px;border:1px solid #e6e4df;border-radius:4px;box-sizing:border-box"></div>
<div style="position:absolute;left:820px;top:612px;width:30px;height:30px;border:1px solid #e6e4df;border-radius:4px;box-sizing:border-box"></div>
<svg style="position:absolute;left:788px;top:615px;" width="24" height="24" viewBox="0 0 24 24"><g fill="none" stroke="#f0561c" stroke-width="1.5" stroke-linecap="round"><path d="M14.3 4.6A3.6 3.6 0 1 0 10.1 10.5L6.6 16.2"/><path d="M11.6 7.1L14.6 12.4C15.3 12.7 16.2 12.6 17.2 12.6A3.4 3.4 0 0 1 18.4 19.1"/><path d="M3.4 15.4A3.6 3.6 0 0 0 10.5 15.9H17.4"/></g></svg>
<svg style="position:absolute;left:823px;top:616px;" width="24" height="22" viewBox="0 0 24 22"><g transform="translate(0 0.7)"><rect x="3" y="6" width="3.9" height="11.6" rx="1.6" fill="#4285f4"/><rect x="17.1" y="8" width="4" height="9.6" rx="1.6" fill="#34a853"/><path d="M4.9 5.3L12 11.6L19.1 5.3" fill="none" stroke="#ea4335" stroke-width="3.8" stroke-linecap="round" stroke-linejoin="round"/><path d="M17.2 8.6V5.5A1.95 1.95 0 0 1 21.1 5.5V8.6Z" fill="#fbbc04"/><circle cx="4.9" cy="5.3" r="1.9" fill="#c5221f"/></g></svg>
<div class="t" style="top:620px;font-size:15px;line-height:15px;font-weight:700;color:#2d2e2e;letter-spacing:-0.35px;left:920px;">Test Status Update</div>
<div class="t" style="top:621px;font-size:15px;line-height:15px;font-weight:400;color:#403f3e;-webkit-text-stroke:0.2px currentColor;left:1587px;">2d ago</div>
<div style="position:absolute;left:1693px;top:621px;width:45px;height:14px;background:#0f6e3f;border-radius:7px"></div>
<div style="position:absolute;left:1711px;top:612px;width:30px;height:30px;background:#fffdf9;border:2px solid #0f6e3f;border-radius:50%;box-sizing:border-box"></div>
<div class="t" style="top:620px;font-size:14.5px;line-height:14.5px;font-weight:700;color:#0f6e3f;letter-spacing:-0.3px;left:1716px;">On</div>
<svg style="position:absolute;left:1774px;top:624px;" width="20" height="7" viewBox="0 0 20 7"><circle cx="3" cy="4" r="2.2" fill="#2d2e2e"/><circle cx="10" cy="4" r="2.2" fill="#2d2e2e"/><circle cx="17" cy="4" r="2.2" fill="#2d2e2e"/></svg>
<div style="position:absolute;left:695px;top:664px;width:1121px;height:1px;background:#d7d5d0"></div>
<svg style="position:absolute;left:711px;top:694px;" width="9" height="16" viewBox="0 0 9 16"><circle cx="2" cy="3" r="1.35" fill="#000"/><circle cx="2" cy="8" r="1.35" fill="#000"/><circle cx="2" cy="13" r="1.35" fill="#000"/><circle cx="6.5" cy="3" r="1.35" fill="#000"/><circle cx="6.5" cy="8" r="1.35" fill="#000"/><circle cx="6.5" cy="13" r="1.35" fill="#000"/></svg>
<div style="position:absolute;left:745px;top:693px;width:18px;height:18px;border:2px solid #8a8782;border-radius:3px;box-sizing:border-box"></div>
<div style="position:absolute;left:785px;top:686px;width:30px;height:30px;border:1px solid #e6e4df;border-radius:4px;box-sizing:border-box"></div>
<div style="position:absolute;left:820px;top:686px;width:30px;height:30px;border:1px solid #e6e4df;border-radius:4px;box-sizing:border-box"></div>
<svg style="position:absolute;left:788px;top:689px;" width="24" height="24" viewBox="0 0 24 24"><g fill="none" stroke="#f0561c" stroke-width="1.5" stroke-linecap="round"><path d="M14.3 4.6A3.6 3.6 0 1 0 10.1 10.5L6.6 16.2"/><path d="M11.6 7.1L14.6 12.4C15.3 12.7 16.2 12.6 17.2 12.6A3.4 3.4 0 0 1 18.4 19.1"/><path d="M3.4 15.4A3.6 3.6 0 0 0 10.5 15.9H17.4"/></g></svg>
<svg style="position:absolute;left:823px;top:690px;" width="24" height="22" viewBox="0 0 24 22"><g transform="translate(0 0.7)"><rect x="3" y="6" width="3.9" height="11.6" rx="1.6" fill="#4285f4"/><rect x="17.1" y="8" width="4" height="9.6" rx="1.6" fill="#34a853"/><path d="M4.9 5.3L12 11.6L19.1 5.3" fill="none" stroke="#ea4335" stroke-width="3.8" stroke-linecap="round" stroke-linejoin="round"/><path d="M17.2 8.6V5.5A1.95 1.95 0 0 1 21.1 5.5V8.6Z" fill="#fbbc04"/><circle cx="4.9" cy="5.3" r="1.9" fill="#c5221f"/></g></svg>
<div class="t" style="top:694px;font-size:15px;line-height:15px;font-weight:700;color:#2d2e2e;letter-spacing:-0.35px;left:920px;">Update Proposal Status</div>
<div class="t" style="top:695px;font-size:15px;line-height:15px;font-weight:400;color:#403f3e;-webkit-text-stroke:0.2px currentColor;left:1587px;">3d ago</div>
<div style="position:absolute;left:1693px;top:695px;width:45px;height:14px;background:#0f6e3f;border-radius:7px"></div>
<div style="position:absolute;left:1711px;top:686px;width:30px;height:30px;background:#fffdf9;border:2px solid #0f6e3f;border-radius:50%;box-sizing:border-box"></div>
<div class="t" style="top:694px;font-size:14.5px;line-height:14.5px;font-weight:700;color:#0f6e3f;letter-spacing:-0.3px;left:1716px;">On</div>
<svg style="position:absolute;left:1774px;top:698px;" width="20" height="7" viewBox="0 0 20 7"><circle cx="3" cy="4" r="2.2" fill="#2d2e2e"/><circle cx="10" cy="4" r="2.2" fill="#2d2e2e"/><circle cx="17" cy="4" r="2.2" fill="#2d2e2e"/></svg>
<div style="position:absolute;left:695px;top:738px;width:1121px;height:1px;background:#d7d5d0"></div>
<div style="position:absolute;left:1700px;top:912px;width:122px;height:44px;background:#ff4f00;border-radius:22px;box-shadow:0 4px 16px rgba(0,0,0,0.18)"></div>
<svg style="position:absolute;left:1714px;top:922px;" width="22" height="22" viewBox="0 0 22 22"><path d="M11 2C15.6 2 19.2 5.2 19.2 9.2C19.2 13.2 15.6 16.3 11 16.3C10.2 16.3 9.4 16.2 8.7 16L4 19.2L5 14.6C3.6 13.3 2.8 11.3 2.8 9.2C2.8 5.2 6.4 2 11 2Z" fill="#000"/></svg>
<div class="t" style="top:926px;font-size:16px;line-height:16px;font-weight:700;color:#000;letter-spacing:-0.2px;left:1744px;">Get help</div>
</body></html>
